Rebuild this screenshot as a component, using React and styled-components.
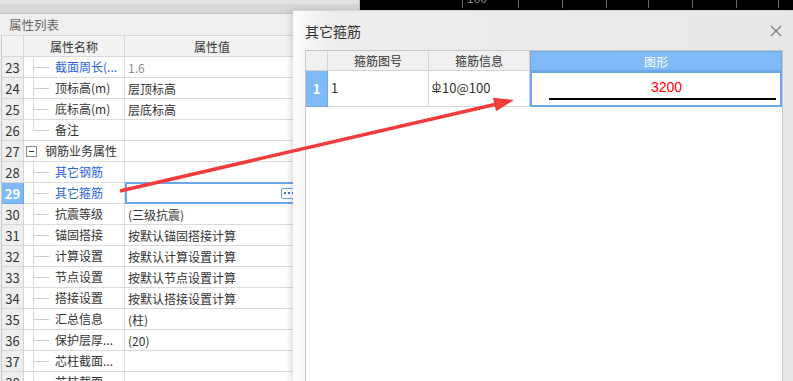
import React from 'react';
import styled, { createGlobalStyle } from 'styled-components';

const Global = createGlobalStyle`
  html, body { margin: 0; padding: 0; background: #fff; }
  body { font-family: "Noto Sans CJK SC", "Microsoft YaHei", sans-serif; }
  * { box-sizing: border-box; }
`;

const Screen = styled.div`
  position: relative;
  width: 793px;
  height: 381px;
  overflow: hidden;
  display: flex;
  background: #000;
`;

const LeftPanel = styled.div`
  width: 360px;
  flex: none;
  display: flex;
  flex-direction: column;
  background: #f0f0f0;
  border-right: 1px solid #bdbdbd;
`;

const TopStrip = styled.div`
  height: 14px;
  flex: none;
  background: #d7d7d9;
  border-top: 4px solid #e3e3e3;
  border-bottom: 1px solid #c4c4c4;
`;

const PanelTitle = styled.div`
  height: 22px;
  flex: none;
  padding-left: 9px;
  font-size: 12.5px;
  line-height: 21px;
  color: #666;
  background: #f0f0f0;
  border-bottom: 1px solid #d6d6d6;
`;

const PropGrid = styled.div`
  width: 299px;
  margin-left: 1px;
  border-left: 1px solid #c8c8c8;
  display: grid;
  grid-template-columns: 22px 101px 1fr;
  grid-auto-rows: 21px;
  background: #fff;
`;

const HeadCell = styled.div`
  background: #f3f3f3;
  border-right: 1px solid #d8d8d8;
  border-bottom: 1px solid #d8d8d8;
  font-size: 12px;
  color: #333;
  display: flex;
  align-items: center;
  justify-content: center;
`;

const NumCell = styled.div`
  background: ${p => (p.$selected ? '#80bbf7' : '#efefef')};
  color: ${p => (p.$selected ? '#fff' : '#333')};
  font-weight: ${p => (p.$selected ? 700 : 400)};
  border-right: 1px solid ${p => (p.$selected ? '#6aa8ea' : '#d6d6d6')};
  border-bottom: 1px solid ${p => (p.$selected ? '#6aa8ea' : '#d6d6d6')};
  font-size: 13px;
  display: flex;
  align-items: center;
  justify-content: center;
`;

const NameCell = styled.div`
  border-right: 1px solid #dadada;
  border-bottom: 1px solid #dadada;
  display: flex;
  align-items: stretch;
  font-size: 12px;
  color: ${p => (p.$blue ? '#2a62d9' : '#333')};
  white-space: nowrap;
  overflow: hidden;
`;

const Guide = styled.span`
  flex: none;
  width: 22px;
  margin-left: 9px;
  background:
    linear-gradient(#d9d9d9, #d9d9d9) left top / 1px ${p => (p.$last ? '50%' : '100%')} no-repeat,
    linear-gradient(#cfcfcf, #cfcfcf) left center / 16px 1px no-repeat;
`;

const Toggle = styled.span`
  flex: none;
  align-self: center;
  width: 11px;
  height: 11px;
  margin-left: 2px;
  margin-right: 8px;
  border: 1px solid #8c8c8c;
  background: #fff;
  display: flex;
  align-items: center;
  justify-content: center;
  &::before {
    content: '';
    width: 5px;
    height: 1px;
    background: #333;
  }
`;

const Label = styled.span`
  align-self: center;
  line-height: 20px;
`;

const ValueCell = styled.div`
  border-bottom: 1px solid #dadada;
  display: flex;
  align-items: center;
  justify-content: space-between;
  padding-left: 3px;
  font-size: 12px;
  color: ${p => (p.$muted ? '#8a8a8a' : '#333')};
  white-space: nowrap;
  ${p =>
    p.$selected &&
    `
    border: 2px solid #6aa8ea;
    padding-left: 1px;
    margin-top: -1px;
    height: 22px;
  `}
`;

const MoreButton = styled.span`
  width: 15px;
  height: 11px;
  margin-right: 2px;
  border: 1px solid #6aa0dd;
  border-radius: 2px;
  display: flex;
  align-items: center;
  justify-content: center;
  gap: 2px;
  & > i {
    width: 2px;
    height: 2px;
    background: #3c78c8;
  }
`;

const Canvas = styled.div`
  flex: 1;
  position: relative;
  background: #000;
`;

const Tick = styled.span`
  position: absolute;
  top: 0;
  width: 1px;
  height: 8px;
  background: #6f6f6f;
`;

const RulerLabel = styled.span`
  position: absolute;
  top: -8px;
  font-family: "Liberation Sans", sans-serif;
  font-size: 12px;
  color: #8a8a8a;
`;

const Dialog = styled.div`
  position: absolute;
  left: 293px;
  top: 10px;
  right: 0;
  bottom: 0;
  display: flex;
  flex-direction: column;
  background: linear-gradient(to right, #fcfcfc 0px, #ededed 40px, #e8e8e8 100%);
  border-top: 1px solid #d4d4d4;
  box-shadow: -3px 0 6px rgba(0, 0, 0, 0.12);
`;

const TitleBar = styled.div`
  height: 39px;
  flex: none;
  display: flex;
  align-items: center;
  justify-content: space-between;
  padding: 0 11px 0 12px;
`;

const Title = styled.div`
  font-size: 14px;
  color: #333;
`;

const CloseIcon = styled.svg`
  width: 12px;
  height: 12px;
  display: block;
`;

const DialogBody = styled.div`
  flex: 1;
  padding: 0 10px 0 12px;
  display: flex;
`;

const BarTable = styled.div`
  flex: 1;
  background: #fff;
  border: 1px solid #c8c8c8;
  border-bottom: none;
  display: grid;
  grid-template-columns: 22px 101px 101px 1fr;
  grid-template-rows: 20px 36px;
  align-content: start;
`;

const BarHead = styled.div`
  background: ${p => (p.$active ? '#80bbf7' : '#f0f0f0')};
  color: ${p => (p.$active ? '#fff' : '#333')};
  border-right: ${p => (p.$last ? 'none' : '1px solid #d4d4d4')};
  border-bottom: 1px solid ${p => (p.$active ? '#6aa8ea' : '#d4d4d4')};
  ${p => p.$active && 'border-left: 1px solid #6aa8ea; border-top: 1px solid #6aa8ea; border-right: 1px solid #6aa8ea;'}
  font-size: 12px;
  display: flex;
  align-items: center;
  justify-content: center;
`;

const BarNum = styled.div`
  background: #80bbf7;
  color: #fff;
  font-weight: 700;
  font-size: 13px;
  border-right: 1px solid #6aa8ea;
  border-bottom: 1px solid #6aa8ea;
  display: flex;
  align-items: center;
  justify-content: center;
`;

const BarCell = styled.div`
  border-right: 1px solid #d4d4d4;
  border-bottom: 1px solid #d4d4d4;
  font-size: 13px;
  color: #333;
  padding-left: 3px;
  padding-bottom: 2px;
  display: flex;
  align-items: center;
`;

const Grade = styled.span`
  display: inline-block;
  font-size: 11px;
  line-height: 11px;
  border-bottom: 1px solid #333;
  margin-right: 1px;
  transform: translateY(-2px);
`;

const ShapeCell = styled.div`
  border: 2px solid #6aa8ea;
  display: flex;
  flex-direction: column;
  padding: 7px 4px 0 17px;
`;

const Dimension = styled.div`
  font-family: "Liberation Sans", sans-serif;
  font-size: 14px;
  line-height: 15px;
  color: #ff0000;
  text-align: center;
  padding-left: 8px;
`;

const Bar = styled.div`
  height: 2px;
  margin-top: 3px;
  background: #000;
`;

const Overlay = styled.svg`
  position: absolute;
  left: 0;
  top: 0;
  width: 793px;
  height: 381px;
  pointer-events: none;
`;

const rows = [
  { n: 23, name: '截面周长(...', value: '1.6', blue: true, muted: true },
  { n: 24, name: '顶标高(m)', value: '层顶标高' },
  { n: 25, name: '底标高(m)', value: '层底标高' },
  { n: 26, name: '备注', value: '', last: true },
  { n: 27, name: '钢筋业务属性', value: '', group: true },
  { n: 28, name: '其它钢筋', value: '', blue: true },
  { n: 29, name: '其它箍筋', value: '', blue: true, selected: true },
  { n: 30, name: '抗震等级', value: '(三级抗震)' },
  { n: 31, name: '锚固搭接', value: '按默认锚固搭接计算' },
  { n: 32, name: '计算设置', value: '按默认计算设置计算' },
  { n: 33, name: '节点设置', value: '按默认节点设置计算' },
  { n: 34, name: '搭接设置', value: '按默认搭接设置计算' },
  { n: 35, name: '汇总信息', value: '(柱)' },
  { n: 36, name: '保护层厚...', value: '(20)' },
  { n: 37, name: '芯柱截面...', value: '' },
  { n: 38, name: '芯柱截面...', value: '' },
];

const ticks = [102, 158, 202, 246, 288, 332, 376, 418];

export default function App() {
  return (
    <>
      <Global />
      <Screen>
        <LeftPanel>
          <TopStrip />
          <PanelTitle>属性列表</PanelTitle>
          <PropGrid>
            <HeadCell />
            <HeadCell>属性名称</HeadCell>
            <HeadCell>属性值</HeadCell>
            {rows.map(r => (
              <React.Fragment key={r.n}>
                <NumCell $selected={r.selected}>{r.n}</NumCell>
                <NameCell $blue={r.blue}>
                  {r.group ? <Toggle /> : <Guide $last={r.last} />}
                  <Label>{r.name}</Label>
                </NameCell>
                <ValueCell $muted={r.muted} $selected={r.selected}>
                  <span>{r.value}</span>
                  {r.selected && (
                    <MoreButton>
                      <i />
                      <i />
                      <i />
                    </MoreButton>
                  )}
                </ValueCell>
              </React.Fragment>
            ))}
          </PropGrid>
        </LeftPanel>
        <Canvas>
          {ticks.map(x => (
            <Tick key={x} style={{ left: x }} />
          ))}
          <RulerLabel style={{ left: 107 }}>100</RulerLabel>
        </Canvas>

        <Dialog>
          <TitleBar>
            <Title>其它箍筋</Title>
            <CloseIcon viewBox="0 0 12 12">
              <path d="M1 1 L11 11 M11 1 L1 11" stroke="#7a7a7a" strokeWidth="1.1" fill="none" />
            </CloseIcon>
          </TitleBar>
          <DialogBody>
            <BarTable>
              <BarHead />
              <BarHead>箍筋图号</BarHead>
              <BarHead>箍筋信息</BarHead>
              <BarHead $active $last>图形</BarHead>
              <BarNum>1</BarNum>
              <BarCell>1</BarCell>
              <BarCell>
                <Grade>ф</Grade>10@100
              </BarCell>
              <ShapeCell>
                <Dimension>3200</Dimension>
                <Bar />
              </ShapeCell>
            </BarTable>
          </DialogBody>
        </Dialog>

        <Overlay viewBox="0 0 793 381">
          <line x1="120" y1="191" x2="496" y2="104.2" stroke="#f23b3b" strokeWidth="3.5" />
          <polygon points="514,100 496.1,111.3 492.9,97.7" fill="#f23b3b" />
        </Overlay>
      </Screen>
    </>
  );
}
